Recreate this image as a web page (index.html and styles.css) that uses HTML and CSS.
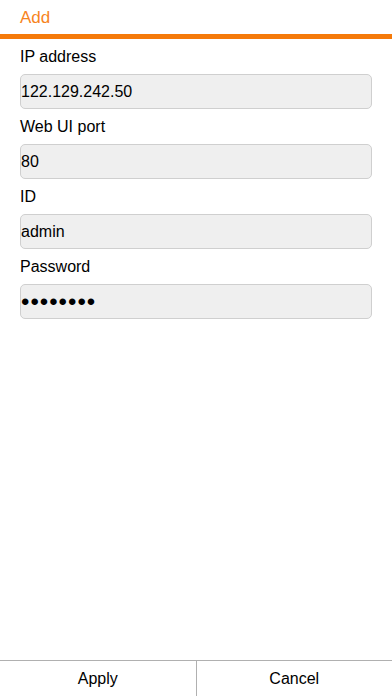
FILE: index.html
```html
<!DOCTYPE html>
<html lang="en">
<head>
    <meta charset="UTF-8">
    <meta name="viewport" content="width=device-width, initial-scale=1.0">
    <title>Add</title>
    <link rel="stylesheet" href="styles.css">
</head>
<body>
    <div class="page">
        <div class="header">Add</div>

        <form class="form" id="addForm">
            <div class="field">
                <label for="ip">IP address</label>
                <input type="text" id="ip" value="122.129.242.50">
            </div>
            <div class="field">
                <label for="port">Web UI port</label>
                <input type="text" id="port" value="80">
            </div>
            <div class="field">
                <label for="userid">ID</label>
                <input type="text" id="userid" value="admin">
            </div>
            <div class="field">
                <label for="pass">Password</label>
                <input type="password" id="pass" class="pass" value="12345678">
            </div>
        </form>

        <div class="actions">
            <button type="button" class="btn">Apply</button>
            <button type="button" class="btn">Cancel</button>
        </div>
    </div>
</body>
</html>
```

FILE: styles.css
```css
html, body { margin: 0; padding: 0; height: 100%; }
body { font-family: "Liberation Sans", Arial, sans-serif; font-size: 16px; color: #000; background: #fff; }
.page { display: flex; flex-direction: column; height: 100%; }
.header { height: 34px; line-height: 35px; padding: 0 20px; font-size: 17px; color: #f7841e; border-bottom: 5px solid #f57a0a; }
.form { flex: 1; padding: 0 20px; }
.field label { display: block; padding-top: 6px; line-height: 24px; margin-bottom: 5px; }
.field input { display: block; box-sizing: border-box; width: 100%; height: 35px; margin: 0; padding: 0; font: inherit; color: #000; background: #efefef; border: 1px solid #cfcfcf; border-radius: 5px; outline: none; }
.field .pass { font-size: 24px; letter-spacing: 1px; }
.actions { display: flex; height: 35px; border-top: 1px solid #b0b0b0; }
.btn { flex: 1; margin: 0; padding: 0; font: inherit; color: #000; background: #fff; border: none; border-radius: 0; cursor: pointer; }
.btn + .btn { border-left: 1px solid #b0b0b0; }
```
